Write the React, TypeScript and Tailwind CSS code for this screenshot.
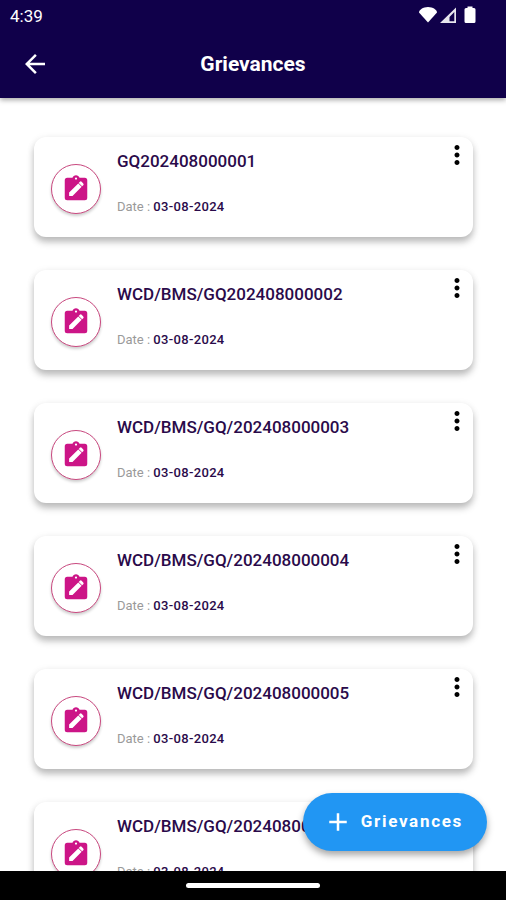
import { MdAdd, MdArrowBack, MdMoreVert } from "react-icons/md";

type Grievance = {
  id: string;
  date: string;
};

const grievances: Grievance[] = [
  { id: "GQ202408000001", date: "03-08-2024" },
  { id: "WCD/BMS/GQ202408000002", date: "03-08-2024" },
  { id: "WCD/BMS/GQ/202408000003", date: "03-08-2024" },
  { id: "WCD/BMS/GQ/202408000004", date: "03-08-2024" },
  { id: "WCD/BMS/GQ/202408000005", date: "03-08-2024" },
  { id: "WCD/BMS/GQ/202408000006", date: "03-08-2024" },
];

function StatusIcons() {
  return (
    <div className="flex items-center self-center text-white">
      <svg className="h-5 w-5" viewBox="0 0 20 20" fill="currentColor">
        <path d="M10 17.5 1 7.500C1 5 5 2 10 2s9 3 9 5.500z" />
      </svg>
      <svg className="h-5 w-5" viewBox="0 0 20 20">
        <path
          d="M18 2.500v15.500H2zM16.300 7 11.500 12v4.300h4.800z"
          fill="currentColor"
          fillRule="evenodd"
          opacity="0.9"
        />
      </svg>
      <svg className="ml-1 h-5 w-4" viewBox="0 0 16 20" fill="currentColor">
        <path d="M5.500 1.500h5V3H12a1.500 1.500 0 0 1 1.500 1.500v12A1.500 1.500 0 0 1 12 18H4a1.500 1.500 0 0 1-1.500-1.500v-12A1.500 1.500 0 0 1 4 3h1.500z" />
      </svg>
    </div>
  );
}

function ClipboardEditIcon() {
  return (
    <svg className="h-[30px] w-[30px]" viewBox="0 0 24 24">
      <path
        fill="#cc1587"
        fillRule="evenodd"
        d="M19 3h-4.180C14.400 1.840 13.300 1 12 1s-2.400.840-2.820 2H5a2 2 0 0 0-2 2v14a2 2 0 0 0 2 2h14a2 2 0 0 0 2-2V5a2 2 0 0 0-2-2zm-7-.3a.9.9 0 1 1 0 1.800.9.9 0 0 1 0-1.800z"
      />
      <path
        fill="#fff"
        d="M6.500 17.500v-2.700l7.300-7.300 2.700 2.700-7.300 7.300zM14.200 7.100l.9-.9a1 1 0 0 1 1.400 0l1.300 1.300a1 1 0 0 1 0 1.400l-.9.9z"
      />
    </svg>
  );
}

function GrievanceCard({ id, date }: Grievance) {
  return (
    <li className="flex items-start rounded-xl bg-white pb-[22px] pl-[17px] shadow-[0_5px_7px_rgba(0,0,0,0.25),0_1px_8px_rgba(0,0,0,0.06)]">
      <div className="mt-[27px] flex h-[50px] w-[50px] shrink-0 items-center justify-center rounded-full border border-[#c9487f] bg-white shadow-[0_2px_3px_rgba(0,0,0,0.2)]">
        <ClipboardEditIcon />
      </div>
      <div className="ml-4 min-w-0 flex-1 pt-3.5">
        <h2 className="truncate text-[17px] leading-5 font-medium text-[#2a0a4a]">{id}</h2>
        <p className="mt-7 text-[13px] leading-4 text-[#9a9a9a]">
          Date : <span className="font-medium tracking-wide text-[#2a0a4a]">{date}</span>
        </p>
      </div>
      <button type="button" aria-label={`Options for ${id}`} className="mt-[3px] mr-px text-black">
        <MdMoreVert className="h-[30px] w-[30px]" />
      </button>
    </li>
  );
}

export default function App() {
  return (
    <div className="relative flex h-screen flex-col overflow-hidden bg-white font-['Roboto',sans-serif]">
      <header className="z-10 bg-[#10004a] text-white shadow-[0_2px_5px_rgba(0,0,0,0.35)]">
        <div className="flex h-[30px] items-end justify-between pr-7 pl-2.5">
          <span className="text-[17px] leading-7">4:39</span>
          <StatusIcons />
        </div>
        <div className="grid h-[68px] grid-cols-[1fr_auto_1fr] items-center px-5">
          <button type="button" aria-label="Back" className="w-fit">
            <MdArrowBack className="h-[30px] w-[30px]" />
          </button>
          <h1 className="text-[21px] leading-7 font-bold">Grievances</h1>
        </div>
      </header>

      <main className="min-h-0 flex-1 overflow-hidden">
        <ul className="flex flex-col gap-[33px] pt-[39px] pr-[33px] pl-[34px]">
          {grievances.map((item) => (
            <GrievanceCard key={item.id} {...item} />
          ))}
        </ul>
      </main>

      <button
        type="button"
        className="absolute right-[19px] bottom-[49px] flex h-[58px] items-center gap-2 rounded-full bg-[#2196f3] px-5 text-white shadow-[0_4px_7px_rgba(0,0,0,0.35)]"
      >
        <MdAdd className="h-[30px] w-[30px]" />
        <span className="pr-1 text-[17px] font-bold tracking-widest">Grievances</span>
      </button>

      <footer className="flex h-[29px] shrink-0 items-center justify-center bg-black">
        <div className="h-[5px] w-[134px] rounded-sm bg-white" />
      </footer>
    </div>
  );
}
